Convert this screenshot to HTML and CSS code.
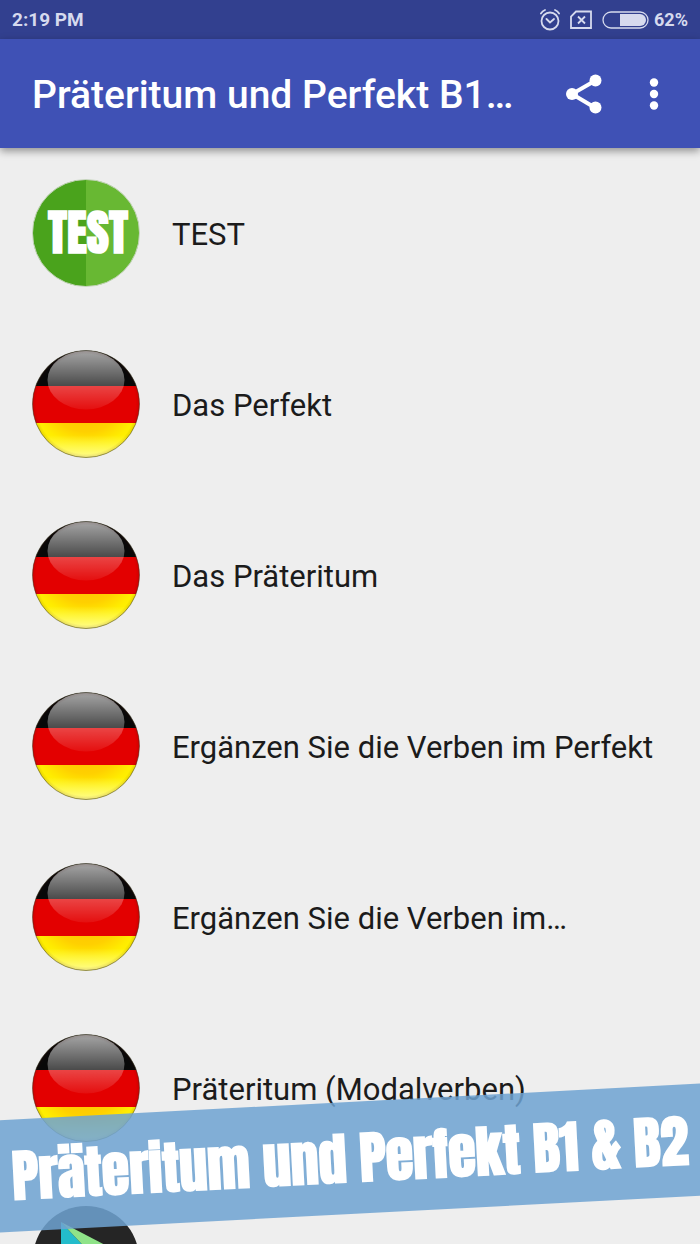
FILE: index.html
```html
<!DOCTYPE html>
<html lang="de">
<head>
<meta charset="utf-8">
<meta name="viewport" content="width=device-width, initial-scale=1">
<title>Präteritum und Perfekt B1 &amp; B2</title>
<link rel="stylesheet" href="styles.css">
</head>
<body>
<svg class="defs" width="0" height="0" aria-hidden="true">
  <defs>
    <clipPath id="disc"><circle cx="54" cy="54" r="53.5"/></clipPath>
    <linearGradient id="gloss" x1="0" y1="0" x2="0" y2="1">
      <stop offset="0" stop-color="#fff" stop-opacity=".64"/>
      <stop offset=".6" stop-color="#fff" stop-opacity=".27"/>
      <stop offset="1" stop-color="#fff" stop-opacity=".06"/>
    </linearGradient>
    <radialGradient id="gold" gradientUnits="userSpaceOnUse" cx="54" cy="66" r="54" gradientTransform="translate(0 26) scale(1 .6)">
      <stop offset="0" stop-color="#ffc400"/>
      <stop offset=".5" stop-color="#ffd000"/>
      <stop offset=".85" stop-color="#ffec00"/>
      <stop offset="1" stop-color="#fff200"/>
    </radialGradient>
    <linearGradient id="glow" x1="0" y1="0" x2="0" y2="1">
      <stop offset=".35" stop-color="#ffffa0" stop-opacity="0"/>
      <stop offset="1" stop-color="#ffffa0" stop-opacity=".9"/>
    </linearGradient>
    <radialGradient id="rim">
      <stop offset=".92" stop-color="#400" stop-opacity="0"/>
      <stop offset="1" stop-color="#400" stop-opacity=".15"/>
    </radialGradient>
    <symbol id="flag" viewBox="0 0 108 108">
      <g clip-path="url(#disc)">
        <path fill="#080808" d="M0 0h108v36H0z"/>
        <path fill="#e30000" d="M0 36h108v37H0z"/>
        <path fill="url(#gold)" d="M0 73h108v35H0z"/>
        <path fill="url(#glow)" d="M0 73h108v35H0z"/>
        <ellipse cx="54" cy="30" rx="38.500" ry="29.500" fill="url(#gloss)"/>
        <circle cx="54" cy="54" r="54" fill="url(#rim)"/>
      </g>
      <circle cx="54" cy="54" r="53.500" fill="none" stroke="#3a3a20" stroke-opacity=".5"/>
    </symbol>
  </defs>
</svg>
<div class="screen">
  <div class="status">
    <span>2:19 PM</span>
    <div class="status-icons">
      <svg width="22" height="22" viewBox="0 0 22 22" fill="none" stroke="currentColor" stroke-width="1.800" stroke-linecap="round"><circle cx="10" cy="12" r="8.500"/><path d="M6.500 10l3.500 3.500 4-3.500M.9 4.500Q2.500 2 5 1M19.100 4.500Q17.500 2 15 1"/></svg>
      <svg width="24" height="20" viewBox="0 0 24 20" fill="none" stroke="currentColor" stroke-width="1.800"><path d="M6 1.500h15v16.500H1V6.500zM8 6.500l7 7M15 6.500l-7 7"/></svg>
      <svg class="battery" width="48" height="18" viewBox="0 0 48 18"><rect x="1" y="1" width="45" height="16" rx="8" fill="none" stroke="currentColor" stroke-width="1.300"/><path fill="currentColor" d="M18 3h20a6 6 0 0 1 0 12H18z"/></svg>
      <span class="percent">62%</span>
    </div>
  </div>
  <header class="bar">
    <h1 class="title">Präteritum und Perfekt B1…</h1>
    <button class="icon-button" aria-label="Teilen"><svg width="36" height="40" viewBox="0 0 36 40"><path d="M29.500 6.500L6 20l23.500 14" fill="none" stroke="#fff" stroke-width="4"/><g fill="#fff"><circle cx="6" cy="20" r="6"/><circle cx="29.500" cy="6.500" r="6"/><circle cx="29.500" cy="33.500" r="6"/></g></svg></button>
    <button class="icon-button" aria-label="Menü"><svg width="10" height="32" viewBox="0 0 10 32" fill="#fff"><circle cx="5" cy="4.500" r="4.200"/><circle cx="5" cy="16" r="4.200"/><circle cx="5" cy="27.500" r="4.200"/></svg></button>
  </header>
  <main class="list">
    <a class="row" href="#test"><span class="badge">TEST</span><span class="label">TEST</span></a>
    <a class="row" href="#perfekt"><svg class="disc"><use href="#flag"/></svg><span class="label">Das Perfekt</span></a>
    <a class="row" href="#praeteritum"><svg class="disc"><use href="#flag"/></svg><span class="label">Das Präteritum</span></a>
    <a class="row" href="#verben-perfekt"><svg class="disc"><use href="#flag"/></svg><span class="label">Ergänzen Sie die Verben im Perfekt</span></a>
    <a class="row" href="#verben"><svg class="disc"><use href="#flag"/></svg><span class="label">Ergänzen Sie die Verben im…</span></a>
    <a class="row" href="#modal"><svg class="disc"><use href="#flag"/></svg><span class="label">Präteritum (Modalverben)</span></a>
    <a class="row" href="#store" aria-label="Store"><svg class="disc" viewBox="0 0 108 108"><circle cx="54" cy="54" r="53" fill="#252525"/><path fill="#23bccb" d="M29 17L63 53 29 91z"/><path fill="#8fe388" d="M29 17L77 42 63 53z"/></svg></a>
  </main>
  <div class="ribbon"><span>Präteritum und Perfekt B1 &amp; B2</span></div>
</div>
</body>
</html>
```
FILE: styles.css
```css
* { box-sizing: border-box; }

body {
  margin: 0;
  background: #eee;
  color: #1b1b1b;
  font-family: Roboto, "Noto Sans", sans-serif;
}

.defs { position: absolute; }

.screen {
  position: relative;
  display: flex;
  flex-direction: column;
  height: 100vh;
  overflow: hidden;
}

.status {
  display: flex;
  flex: none;
  align-items: center;
  justify-content: space-between;
  height: 39px;
  padding: 0 12px;
  background: #32408f;
  color: #d6daee;
  font-size: 19px;
  font-weight: 700;
}

.status-icons {
  display: flex;
  align-items: center;
  gap: 8px;
}

.battery { margin-right: -4px; }

.percent { font-size: 18px; }

.bar {
  z-index: 1;
  display: flex;
  flex: none;
  align-items: center;
  height: 109px;
  padding: 0 33px 0 32px;
  background: #3f51b5;
  box-shadow: 0 3px 8px rgba(0, 0, 0, .4);
  color: #fff;
}

.title {
  flex: 1;
  margin: 0;
  padding-top: 2px;
  overflow: hidden;
  font-size: 39px;
  font-weight: 500;
  line-height: 48px;
  white-space: nowrap;
}

.icon-button {
  display: flex;
  padding: 0;
  border: 0;
  background: none;
}

.icon-button + .icon-button {
  padding: 0 8px 0 47px;
}

.list {
  flex: 1;
  min-height: 0;
}

.row {
  display: flex;
  align-items: center;
  gap: 32px;
  height: 171px;
  padding: 0 32px 1px;
  color: inherit;
  font-size: 31px;
  line-height: 40px;
  text-decoration: none;
  white-space: nowrap;
}

.label { padding-top: 4px; }

.disc,
.badge {
  flex: none;
  width: 108px;
  height: 108px;
}

.badge {
  display: flex;
  align-items: center;
  justify-content: center;
  padding-left: 4px;
  border: 1px solid #c4d4ba;
  border-radius: 50%;
  background: linear-gradient(90deg, #4aa31c 50%, #68b833 50%);
  color: #fff;
  font-family: Impact, Anton, "Roboto Condensed", "Open Sans Condensed", Roboto, sans-serif;
  font-size: 48px;
  font-weight: 700;
}

.ribbon {
  position: absolute;
  right: -20px;
  bottom: 30px;
  left: -20px;
  display: flex;
  align-items: center;
  justify-content: center;
  height: 112px;
  background: rgba(111, 163, 210, .86);
  color: #fff;
  font-family: Impact, Anton, "Roboto Condensed", "Open Sans Condensed", Roboto, sans-serif;
  font-size: 56px;
  font-weight: 700;
  white-space: nowrap;
  transform: rotate(-3deg);
}
```
